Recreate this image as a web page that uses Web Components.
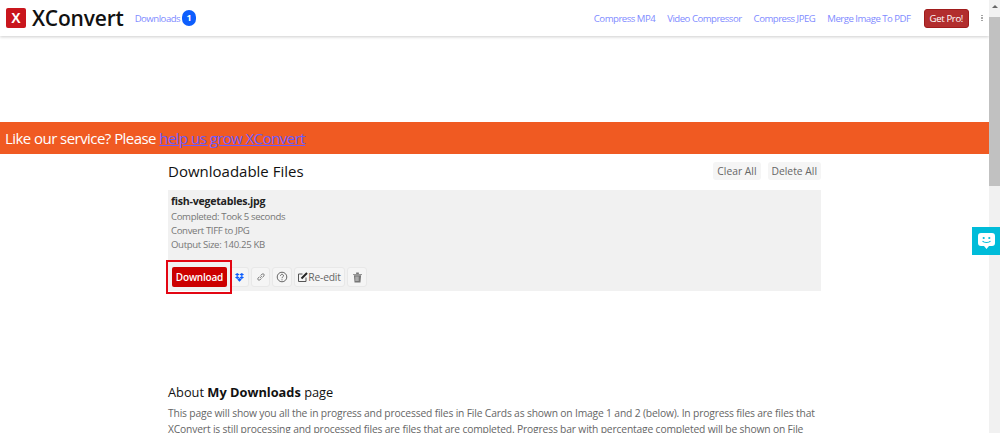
<!DOCTYPE html>
<html lang="en">
<head>
<meta charset="utf-8">
<title>XConvert - My Downloads</title>
<style>
  html, body { margin: 0; height: 433px; overflow: hidden; background: #fff; }
  body { font-family: "Open Sans", "Noto Sans", sans-serif; color: #212529; }
  x-page { display: block; }
</style>
</head>
<body>
<x-page>
  <x-navbar></x-navbar>
  <x-banner>Like our service? Please <a slot="link" href="#">help us grow XConvert</a></x-banner>
  <x-files>
    <x-file-card name="fish-vegetables.jpg">
      <div>Completed: Took 5 seconds</div>
      <div>Convert TIFF to JPG</div>
      <div>Output Size: 140.25 KB</div>
    </x-file-card>
  </x-files>
  <x-about>
    <span slot="title">About <b>My Downloads</b> page</span>
    This page will show you all the in progress and processed files in File Cards as shown on Image 1 and 2 (below). In progress files are files that XConvert is still processing and processed files are files that are completed. Progress bar with percentage completed will be shown on File
  </x-about>
</x-page>
<x-scrollbar></x-scrollbar>
<x-chat-tab></x-chat-tab>

<script>
(() => {
  const font = `"Open Sans", "Noto Sans", sans-serif`

  class Navbar extends HTMLElement {
    constructor () {
      super()
      this.attachShadow({ mode: 'open' })
      this.shadowRoot.innerHTML = `
        <style>
          :host { display: flex; align-items: center; width: 989px; height: 36px; box-sizing: border-box;
                  padding: 0 6px 0 6px; background: #fff; box-shadow: 0 1px 3px rgba(0,0,0,.2);
                  font-family: ${font}; position: relative; }
          .logo { width: 20px; height: 20px; background: #c9161d; border-radius: 2px; color: #fff;
                  font: 700 14px/20px "Liberation Sans", sans-serif; text-align: center; }
          .brand { font-size: 21px; font-weight: 600; color: #111; margin-left: 6px; letter-spacing: -.2px; }
          a { color: #7f8cff; text-decoration: none; font-size: 9.600px; letter-spacing: -.5px; }
          .dl { margin-left: 11px; display: flex; align-items: center; gap: 2px; }
          .badge { width: 14px; height: 16px; border-radius: 8px; background: #0d5efd; color: #fff;
                   font-size: 9px; font-weight: 700; line-height: 16px; text-align: center; letter-spacing: 0; }
          .links { margin-left: auto; display: flex; align-items: center; gap: 12px; }
          .pro { margin-left: 1px; background: #b22e2e; color: #fff; border: 1px solid #a01c1c; border-radius: 3px;
                 line-height: 17px; padding: 0 5px; letter-spacing: -.35px; }
          .more { width: 2px; display: flex; flex-direction: column; gap: 1px; }
          .more i { width: 1.500px; height: 1.500px; background: #999; border-radius: 50%; }
        </style>
        <div class="logo">X</div>
        <div class="brand">XConvert</div>
        <a class="dl" href="#">Downloads <span class="badge">1</span></a>
        <div class="links">
          <a href="#">Compress MP4</a>
          <a href="#">Video Compressor</a>
          <a href="#">Compress JPEG</a>
          <a href="#">Merge Image To PDF</a>
          <a class="pro" href="#">Get Pro!</a>
          <div class="more"><i></i><i></i><i></i></div>
        </div>
      `
    }
  }

  class Banner extends HTMLElement {
    constructor () {
      super()
      this.attachShadow({ mode: 'open' })
      this.shadowRoot.innerHTML = `
        <style>
          :host { display: block; width: 989px; height: 32px; margin-top: 86px; background: #f05a22; color: #fff;
                  font: 400 15px/32px ${font}; padding-left: 5px; box-sizing: border-box; white-space: nowrap; letter-spacing: -.55px; }
          ::slotted(a) { color: #6a5cff; text-decoration: underline; }
        </style>
        <slot></slot><slot name="link"></slot>
      `
    }
  }

  class Files extends HTMLElement {
    constructor () {
      super()
      this.attachShadow({ mode: 'open' })
      this.shadowRoot.innerHTML = `
        <style>
          :host { display: block; width: 653px; margin-left: 168px; font-family: ${font}; }
          header { display: flex; align-items: center; height: 36px; box-sizing: border-box; padding-bottom: 2px; }
          h2 { margin: 0; font-size: 15px; font-weight: 400; color: #111; }
          .actions { margin-left: auto; display: flex; gap: 7px; }
          button { font: 400 10.300px/18px ${font}; color: #666; background: #f5f5f5; border: 0; border-radius: 3px;
                   padding: 0 4px; height: 18px; }
        </style>
        <header>
          <h2>Downloadable Files</h2>
          <div class="actions"><button>Clear All</button><button>Delete All</button></div>
        </header>
        <slot></slot>
      `
    }
  }

  class FileCard extends HTMLElement {
    constructor () {
      super()
      this.attachShadow({ mode: 'open' })
      this.shadowRoot.innerHTML = `
        <style>
          :host { display: block; height: 101px; box-sizing: border-box; padding: 4px 3px 0; background: #f1f1f1;
                  font-family: ${font}; }
          .name { font-size: 10.600px; font-weight: 700; color: #222; line-height: 14px; margin-bottom: 2px; letter-spacing: -.25px; }
          .meta { font-size: 9.600px; line-height: 14px; color: #777; letter-spacing: -.35px; }
          .tools { margin-top: 8px; margin-left: -5px; display: flex; align-items: flex-start; gap: 2px; }
          .hi { box-sizing: border-box; width: 66px; height: 34px; padding: 5px 3px 4px 4px; border: 2px solid #e30613;
                display: flex; }
          .dl { background: #cc0000; color: #fff; border: 0; border-radius: 2px; height: 20px; width: 55px; padding: 0;
                font: 600 10px/20px ${font}; letter-spacing: -.2px; }
          .tool { margin-top: 7px; height: 20px; box-sizing: border-box; background: #f5f5f5; border: 1px solid #e8e8e8;
                  border-radius: 3px; display: flex; align-items: center; justify-content: center; color: #666;
                  font: 400 10.300px/18px ${font}; letter-spacing: -.2px; }
          .drop { width: 17px; margin-left: -2px; border-left: 0; border-radius: 0 3px 3px 0; padding-right: 2px; }
          .link { width: 19px; }
          .help { width: 20px; }
          .edit { width: 51px; }
          .trash { width: 20px; }
          svg { display: block; }
        </style>
        <div class="name"></div>
        <div class="meta"><slot></slot></div>
        <div class="tools">
          <div class="hi"><button class="dl">Download</button></div>
          <div class="tool drop">
            <svg width="9" height="9" viewBox="0 0 12 12" fill="#0d5efd"><path d="M3 0 6 2 3 4 0 2zM9 0l3 2-3 2-3-2zM3 4l3 2-3 2-3-2zM9 4l3 2-3 2-3-2zM6 6.800 9 8.800 6 11.500 3 8.800z"/></svg>
          </div>
          <div class="tool link">
            <svg width="10" height="10" viewBox="0 0 10 10" fill="none" stroke="#777" stroke-width="1"><path d="M4.200 5.800 5.800 4.200M3.600 4.600 2 6.200a1.300 1.300 0 0 0 1.800 1.800l1.600-1.600M4.600 3.600 6.200 2A1.300 1.300 0 0 1 8 3.800L6.400 5.400"/></svg>
          </div>
          <div class="tool help">
            <svg width="12" height="12" viewBox="0 0 12 12" fill="none" stroke="#666" stroke-width="1"><circle cx="6" cy="6" r="4.800"/><path d="M4.500 4.700a1.500 1.400 0 1 1 2.300 1.200C6.200 6.300 6 6.600 6 7.200"/><path d="M6 8.300v1"/></svg>
          </div>
          <div class="tool edit">
            <svg width="10" height="10" viewBox="0 0 10 10" fill="none" stroke="#555" stroke-width="1"><path d="M8 5.500V9.500H.5V2H4.500"/><path d="M3.500 6.500 9 1" stroke-width="2" stroke="#222"/></svg>Re-edit
          </div>
          <div class="tool trash">
            <svg width="9" height="11" viewBox="0 0 10 12" fill="#777"><path fill-rule="evenodd" d="M0 2h10v1H0zM3.500.5h3V2h-3zM1 3.500h8L8.300 11.500H1.700zM3 5v5h.8V5zm2.100 0v5h.8V5z"/></svg>
          </div>
        </div>
      `
      this.shadowRoot.querySelector('.name').textContent = this.getAttribute('name')
    }
  }

  class About extends HTMLElement {
    constructor () {
      super()
      this.attachShadow({ mode: 'open' })
      this.shadowRoot.innerHTML = `
        <style>
          :host { display: block; width: 653px; margin: 93px 0 0 168px; font-family: ${font}; }
          h3 { margin: 0 0 4px; font-size: 12.800px; line-height: 17px; font-weight: 400; color: #111; }
          p { margin: 0; font-size: 10.300px; line-height: 16px; color: #666; letter-spacing: -.17px; }
        </style>
        <h3><slot name="title"></slot></h3>
        <p><slot></slot></p>
      `
    }
  }

  class Scrollbar extends HTMLElement {
    constructor () {
      super()
      this.attachShadow({ mode: 'open' })
      this.shadowRoot.innerHTML = `
        <style>
          :host { position: fixed; top: 0; right: 0; bottom: 0; width: 11px; background: #f1f1f1; }
          .arrow { width: 0; height: 0; margin: 5px auto 0; border: 3px solid transparent; border-top: 0; border-bottom: 3px solid #666; }
          .thumb { position: absolute; top: 17px; left: 0; right: 0; height: 169px; background: #c1c1c1; }
        </style>
        <div class="arrow"></div>
        <div class="thumb"></div>
      `
    }
  }

  class ChatTab extends HTMLElement {
    constructor () {
      super()
      this.attachShadow({ mode: 'open' })
      this.shadowRoot.innerHTML = `
        <style>
          :host { position: fixed; top: 227px; right: 0; width: 28px; height: 28px; background: #00bcd9; display: flex;
                  align-items: center; justify-content: center; }
        </style>
        <svg width="17" height="16" viewBox="0 0 17 16">
          <path fill="#fff" d="M3 0h11a3 3 0 0 1 3 3v7a3 3 0 0 1-3 3h-3l-2.500 3L6 13H3a3 3 0 0 1-3-3V3a3 3 0 0 1 3-3z"/>
          <circle cx="5.700" cy="5" r="1.100" fill="#00bcd9"/><circle cx="11.300" cy="5" r="1.100" fill="#00bcd9"/>
          <path d="M4.500 8c1.500 2 6.500 2 8 0" fill="none" stroke="#00bcd9" stroke-width="1.200"/>
        </svg>
      `
    }
  }

  customElements.define('x-navbar', Navbar)
  customElements.define('x-banner', Banner)
  customElements.define('x-files', Files)
  customElements.define('x-file-card', FileCard)
  customElements.define('x-about', About)
  customElements.define('x-scrollbar', Scrollbar)
  customElements.define('x-chat-tab', ChatTab)
})()
</script>
</body>
</html>
